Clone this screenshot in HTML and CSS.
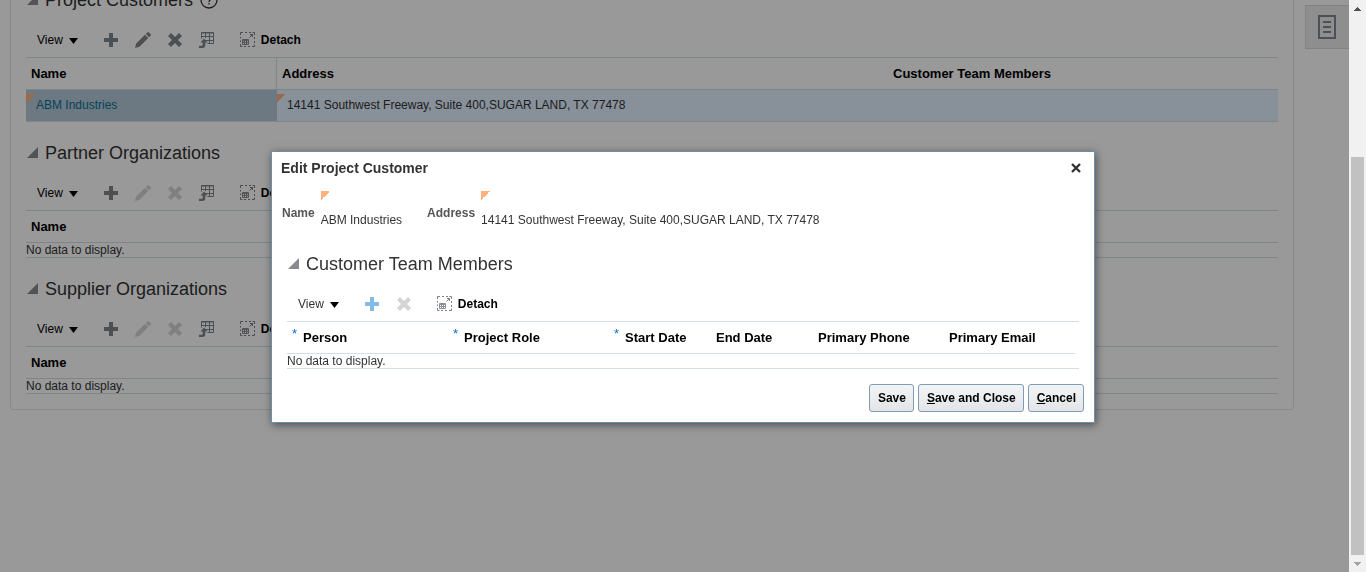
FILE: index.html
```html
<!DOCTYPE html>
<html lang="en">
<head>
<meta charset="utf-8">
<title>Edit Project Customer</title>
<link rel="stylesheet" href="styles.css">
</head>
<body>
<svg class="sprite" aria-hidden="true">
  <symbol id="i-tri" viewBox="0 0 11 11"><path d="M11 0V11H0Z" fill="#878b8f"/></symbol>
  <symbol id="i-down" viewBox="0 0 9 6"><path d="M0 0H9L4.500 6Z" fill="#000"/></symbol>
  <symbol id="i-plus" viewBox="0 0 16 16"><path d="M6 1h4v5h5v4h-5v5H6v-5H1V6h5z" fill="currentColor"/></symbol>
  <symbol id="i-pencil" viewBox="0 0 16 16"><path d="M0 16l1.200-4.500 8.800-8.800 3.300 3.300-8.800 8.800zM10.800 1.900l1.500-1.500q.8-.7 1.600 0l1.700 1.700q.7.800 0 1.600l-1.500 1.500z" fill="currentColor"/></symbol>
  <symbol id="i-x" viewBox="0 0 16 16"><path d="M4 1l4 4 4-4 3 3-4 4 4 4-3 3-4-4-4 4-3-3 4-4-4-4z" fill="currentColor"/></symbol>
  <symbol id="i-export" viewBox="0 0 16 16"><path d="M2.500 6.500V.5h12v11h-6M2 1h13M2.500 4.500h12M6 8.500h8.500M6.500 1v5M10.500 1v10.500" fill="none" stroke="currentColor"/><path d="M5 6.500L8.500 10.500H6.300V13q0 3-3 3H0v-2.300h2.500q1.200 0 1.200-1.200v-2H1.500z" fill="currentColor"/></symbol>
  <symbol id="i-detach" viewBox="0 0 16 16"><path d="M1.500 3V.5H4M6 .5h2M10 .5h2M13.500 .5h2V3M15.500 5v2M15.500 9v2M15.500 12.500v2H13M11 14.500H9M7 14.500H5M3.500 14.500h-2V12M1.500 10V8.500M1.500 6.500V5" fill="none" stroke="#7c8186"/><path d="M3.500 7.500h6v5h-6zM3 8.500h7M3 10.500h7M5.500 8v5M7.500 8v5" fill="none" stroke="#8b9095"/><path d="M10.500 5.500l3-3M11 2.500h2.500V5" fill="none" stroke="#7c8186"/></symbol>
</svg>

<div class="page">
  <main class="panel">
    <section class="section">
      <h2 class="title"><svg class="tri"><use href="#i-tri"/></svg>Project Customers
        <svg class="help" viewBox="0 0 18 18"><circle cx="9" cy="9" r="8" fill="none" stroke="#333" stroke-width="1.300"/><path d="M6.500 7q0-2.600 2.500-2.600T11.500 7q0 1-1.200 1.800T9 11M9 12v1.600" fill="none" stroke="#333" stroke-width="1.300"/></svg></h2>
      <div class="toolbar">
        <button class="view">View<svg class="down"><use href="#i-down"/></svg></button>
        <button class="tool" aria-label="Add"><svg class="icon"><use href="#i-plus"/></svg></button>
        <button class="tool" aria-label="Edit"><svg class="icon"><use href="#i-pencil"/></svg></button>
        <button class="tool" aria-label="Delete"><svg class="icon"><use href="#i-x"/></svg></button>
        <button class="tool" aria-label="Export"><svg class="icon"><use href="#i-export"/></svg></button>
        <button class="detach"><svg class="icon"><use href="#i-detach"/></svg>Detach</button>
      </div>
      <table class="grid customers">
        <colgroup><col class="c-name"><col class="c-address"><col></colgroup>
        <thead><tr><th class="ruled">Name</th><th>Address</th><th>Customer Team Members</th></tr></thead>
        <tbody><tr>
          <td class="picked changed"><a class="link" href="#">ABM Industries</a></td>
          <td class="changed">14141 Southwest Freeway, Suite 400,SUGAR LAND, TX 77478</td>
          <td></td>
        </tr></tbody>
      </table>
    </section>

    <section class="section">
      <h2 class="title"><svg class="tri"><use href="#i-tri"/></svg>Partner Organizations</h2>
      <div class="toolbar">
        <button class="view">View<svg class="down"><use href="#i-down"/></svg></button>
        <button class="tool" aria-label="Add"><svg class="icon"><use href="#i-plus"/></svg></button>
        <button class="tool" aria-label="Edit" disabled><svg class="icon"><use href="#i-pencil"/></svg></button>
        <button class="tool" aria-label="Delete" disabled><svg class="icon"><use href="#i-x"/></svg></button>
        <button class="tool" aria-label="Export"><svg class="icon"><use href="#i-export"/></svg></button>
        <button class="detach"><svg class="icon"><use href="#i-detach"/></svg>Detach</button>
      </div>
      <table class="grid">
        <thead><tr><th>Name</th></tr></thead>
        <tbody><tr><td class="empty">No data to display.</td></tr></tbody>
      </table>
    </section>

    <section class="section">
      <h2 class="title"><svg class="tri"><use href="#i-tri"/></svg>Supplier Organizations</h2>
      <div class="toolbar">
        <button class="view">View<svg class="down"><use href="#i-down"/></svg></button>
        <button class="tool" aria-label="Add"><svg class="icon"><use href="#i-plus"/></svg></button>
        <button class="tool" aria-label="Edit" disabled><svg class="icon"><use href="#i-pencil"/></svg></button>
        <button class="tool" aria-label="Delete" disabled><svg class="icon"><use href="#i-x"/></svg></button>
        <button class="tool" aria-label="Export"><svg class="icon"><use href="#i-export"/></svg></button>
        <button class="detach"><svg class="icon"><use href="#i-detach"/></svg>Detach</button>
      </div>
      <table class="grid">
        <thead><tr><th>Name</th></tr></thead>
        <tbody><tr><td class="empty">No data to display.</td></tr></tbody>
      </table>
    </section>
  </main>
  <aside class="side">
    <button class="side-tab" aria-label="Details"><svg class="doc" viewBox="0 0 18 24"><path d="M1 1h16v22H1zM5 7h8M5 12h8M5 17h8" fill="none" stroke="#7d8790" stroke-width="2"/></svg></button>
  </aside>
  <div class="dim"></div>
</div>

<div class="scrollbar">
  <button class="scroll-end" aria-label="Scroll up"><svg width="7" height="4"><path d="M3 0h1v1h1v1h1v1h1v1H0V3h1V2h1V1h1z" fill="#505050"/></svg></button>
  <div class="track"><div class="thumb"></div></div>
  <button class="scroll-end" aria-label="Scroll down"><svg width="7" height="4"><path d="M0 0h7v1H6v1H5v1H4v1H3V3H2V2H1V1H0z" fill="#a3a3a3"/></svg></button>
</div>

<div class="layer">
  <div class="dialog" role="dialog" aria-labelledby="dialog-title">
    <header class="dialog-head">
      <h1 class="dialog-title" id="dialog-title">Edit Project Customer</h1>
      <button class="close" aria-label="Close"><svg width="10" height="10" viewBox="0 0 10 10"><path d="M1 1l8 8M9 1l-8 8" stroke="#333" stroke-width="2.400"/></svg></button>
    </header>
    <dl class="fields">
      <dt class="label">Name</dt><dd class="value">ABM Industries</dd>
      <dt class="label">Address</dt><dd class="value">14141 Southwest Freeway, Suite 400,SUGAR LAND, TX 77478</dd>
    </dl>
    <section class="dialog-body">
      <h2 class="title"><svg class="tri"><use href="#i-tri"/></svg>Customer Team Members</h2>
      <div class="toolbar">
        <button class="view soft">View<svg class="down"><use href="#i-down"/></svg></button>
        <button class="tool add" aria-label="Add"><svg class="icon"><use href="#i-plus"/></svg></button>
        <button class="tool" aria-label="Delete" disabled><svg class="icon"><use href="#i-x"/></svg></button>
        <button class="detach"><svg class="icon"><use href="#i-detach"/></svg>Detach</button>
      </div>
      <table class="grid members">
        <colgroup><col class="m-wide"><col class="m-wide"><col class="m-date"><col class="m-date"><col class="m-contact"><col class="m-contact"><col></colgroup>
        <thead><tr>
          <th><span class="star">*</span>Person</th>
          <th><span class="star">*</span>Project Role</th>
          <th><span class="star">*</span>Start Date</th>
          <th>End Date</th>
          <th>Primary Phone</th>
          <th>Primary Email</th>
          <td class="filler"></td>
        </tr></thead>
        <tbody><tr><td class="empty" colspan="7">No data to display.</td></tr></tbody>
      </table>
    </section>
    <footer class="actions">
      <button class="btn">Save</button>
      <button class="btn"><u>S</u>ave and Close</button>
      <button class="btn"><u>C</u>ancel</button>
    </footer>
  </div>
</div>
</body>
</html>
```
FILE: styles.css
```css
* { box-sizing: border-box; }

body {
  margin: 0;
  height: 100vh;
  display: flex;
  overflow: hidden;
  background: #fff;
  color: #333;
  font: 12px/14px "Liberation Sans", Arial, sans-serif;
}

button {
  margin: 0;
  padding: 0;
  border: 0;
  background: none;
  color: inherit;
  font: inherit;
}

svg { display: block; flex: none; }
.sprite { display: none; }

/* Page */
.page {
  position: relative;
  flex: 1;
  min-width: 0;
  display: flex;
  align-items: flex-start;
  gap: 11px;
  padding-left: 10px;
  overflow: hidden;
}

.panel {
  flex: 1;
  min-width: 0;
  margin-top: -22px;
  padding: 0 15px 15px;
  border: 1px solid #dfe4e7;
  border-radius: 3px;
}

.section + .section { margin-top: 10px; }

.title {
  display: flex;
  align-items: center;
  gap: 7px;
  height: 42px;
  margin: 0;
  padding-left: 1px;
  font-size: 18px;
  font-weight: normal;
  line-height: 22px;
}

.tri { width: 11px; height: 11px; margin-bottom: 1px; }
.help { width: 18px; height: 18px; }

.toolbar {
  display: flex;
  align-items: center;
  gap: 16px;
  height: 36px;
  padding: 2px 0 0 11px;
}

.view {
  display: flex;
  align-items: center;
  gap: 6px;
  margin-right: 9px;
  color: #000;
}

.view.soft { color: #333; }
.down { width: 9px; height: 6px; margin-top: 2px; }
.icon { width: 16px; height: 16px; }
.tool { color: #80868b; }
.tool.add { color: #84bbe6; }
.tool:disabled { color: #d3d5d6; }

.detach {
  display: flex;
  align-items: center;
  gap: 6px;
  margin-left: 8px;
  color: #000;
  font-weight: bold;
}

/* Tables */
.grid {
  width: 100%;
  table-layout: fixed;
  border-spacing: 0;
  border-top: 1px solid #d3dfe6;
}

.grid th {
  height: 32px;
  padding: 0 5px;
  border-bottom: 1px solid #d3dfe6;
  color: #000;
  font-size: 13px;
  text-align: left;
  white-space: nowrap;
}

.grid .ruled { border-right: 1px solid #d3dfe6; }
.grid .filler { padding: 0; }

.empty {
  height: 15px;
  padding: 0;
  border-bottom: 1px solid #d3dfe6;
}

.c-name { width: 251px; }
.c-address { width: 611px; }

.customers td {
  height: 32px;
  padding: 0 10px 2px;
  border-bottom: 1px solid #d3dfe6;
  background-color: #e3f1ff;
}

.customers .picked { background-color: #b4c9d9; }

.customers .changed {
  background-image: linear-gradient(135deg, #ffb27c 50%, transparent 50%);
  background-position: 0 4px;
  background-size: 9px 9px;
  background-repeat: no-repeat;
}

.link { color: #0a7193; text-decoration: none; }

/* Side drawer */
.side { flex: none; width: 44px; padding-top: 5px; }

.side-tab {
  display: flex;
  align-items: center;
  width: 100%;
  height: 44px;
  padding-left: 12px;
  border: 1px solid #d6dadd;
  border-right: 0;
  background: #ededed;
}

.doc { width: 18px; height: 24px; }

.dim {
  position: absolute;
  inset: 0;
  background: rgba(0, 0, 0, 0.4);
}

/* Scrollbar */
.scrollbar {
  flex: none;
  display: flex;
  flex-direction: column;
  width: 17px;
  background: #f1f1f1;
}

.scroll-end {
  display: flex;
  align-items: center;
  justify-content: center;
  height: 17px;
}

.track {
  flex: 1;
  display: flex;
  flex-direction: column;
  justify-content: flex-end;
  padding: 0 2px;
}

.thumb { height: 74%; background: #c1c1c1; }

/* Dialog */
.layer {
  position: fixed;
  inset: 0;
  display: flex;
  align-items: center;
  justify-content: center;
  padding-top: 2px;
}

.dialog {
  width: 824px;
  max-width: 100%;
  border: 1px solid #6e8fa9;
  background: #fff;
  box-shadow: 1px 2px 8px rgba(0, 0, 0, 0.5);
}

.dialog-head {
  display: flex;
  align-items: center;
  justify-content: space-between;
  height: 31px;
  padding: 0 13px 0 9px;
}

.dialog-title {
  margin: 0;
  font-size: 14px;
  line-height: 18px;
}

.fields {
  display: flex;
  align-items: flex-start;
  height: 60px;
  margin: 0;
  padding: 8px 0 0 10px;
}

.label {
  margin-right: 6px;
  padding-top: 15px;
  color: #555;
  font-weight: bold;
}

.value {
  margin: 0 25px 0 0;
  padding-top: 22px;
  background: linear-gradient(135deg, #ffb27c 50%, transparent 50%) 0 0 / 9px 9px no-repeat;
}

.dialog-body { padding: 0 15px; }

.m-wide { width: 161px; }
.m-date { width: 102px; }
.m-contact { width: 131px; }

.star {
  padding-right: 6px;
  color: #0572ce;
  font-weight: normal;
  line-height: 0;
  vertical-align: 4px;
}

.actions {
  display: flex;
  justify-content: flex-end;
  gap: 4px;
  padding: 15px 10px 10px;
}

.btn {
  height: 28px;
  padding: 0 7px 0 8px;
  border: 1px solid #7f9cb3;
  border-radius: 3px;
  background: linear-gradient(#f3f4f5, #e2e5e8);
  color: #000;
  font-weight: bold;
}
```
